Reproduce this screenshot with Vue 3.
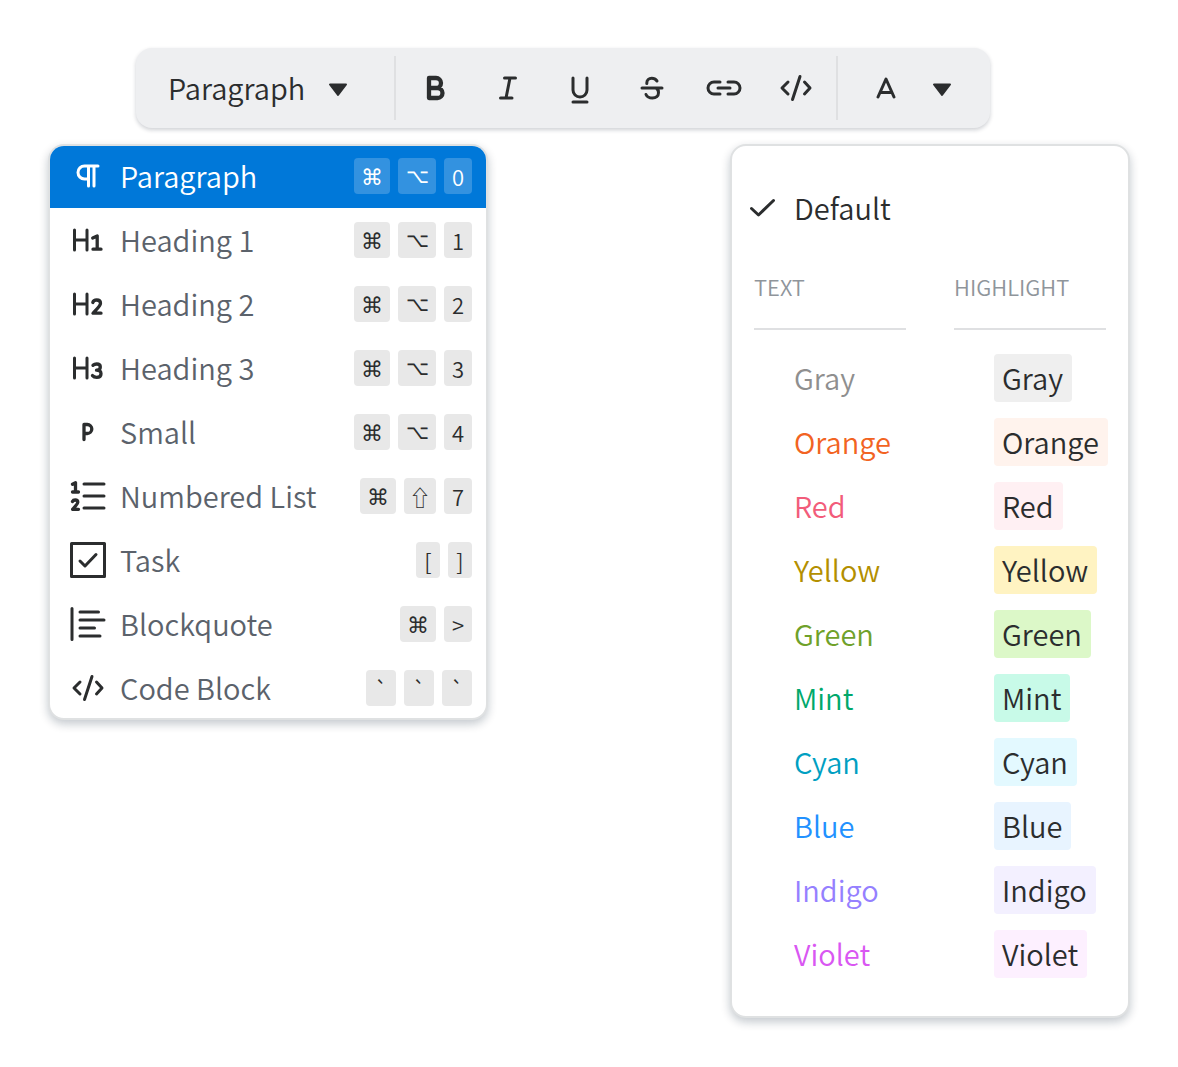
<script setup>
const formats = [
  { name: 'Bold', wide: true, d: 'M13 10h7a5 5 0 0 1 0 10H13zM13 20h8.500a5 5 0 0 1 0 10H13z' },
  { name: 'Italic', d: 'M16.500 10H27.500M12.500 30H24M22 10L18 30' },
  { name: 'Underline', d: 'M13 10V22a7 7 0 0 0 14 0V10M13 34H27' },
  { name: 'Strikethrough', d: 'M10 20H30M25 13C23.500 11 21.500 10.300 19.800 10.300C16.800 10.300 14.800 12.300 14.800 15V15.500M24.500 20.500C26 21.500 26.500 23 26.500 24.700C26.500 28 24 30 20.500 30C17.500 30 15 28.800 14 26.500' },
  { name: 'Link', d: 'M16 14H10a6 6 0 0 0 0 12H16M24 14H30a6 6 0 0 1 0 12H24M14 20H26' },
  { name: 'Code', d: 'M12 14L6 20L12 26M28.500 14L34 20L28.500 26M24 8.500L16.500 31.500' },
]

const H = 'M4.500 8V28M17 8V28M4.500 18H17'
const blocks = [
  { name: 'Paragraph', active: true, keys: ['⌘', '⌥', '0'], d: 'M28 8H14.500a6.500 6.500 0 0 0 0 13H18.500M18.500 8V28M24 8V28' },
  { name: 'Heading 1', keys: ['⌘', '⌥', '1'], d: H, bold: 'M22.700 16L27.200 14V27M23 27.200H31' },
  { name: 'Heading 2', keys: ['⌘', '⌥', '2'], d: H, bold: 'M22.800 16.500C23.300 14.800 24.800 14 26.700 14C29 14 30.500 15.200 30.500 17.200C30.500 20 27 22.500 23 27.200H31' },
  { name: 'Heading 3', keys: ['⌘', '⌥', '3'], d: H, bold: 'M23 15.300C24 14.400 25.200 14 26.700 14C28.800 14 30.300 15 30.300 17C30.300 18.900 28.900 20.200 26.500 20.200C29.200 20.200 31 21.500 31 23.700C31 26 29.200 27.300 26.700 27.300C24.800 27.300 23.500 26.800 22.500 25.600' },
  { name: 'Small', keys: ['⌘', '⌥', '4'], d: '', bold: 'M14 25.500V10.500H17.300a4.500 4.500 0 0 1 0 9H14' },
  { name: 'Numbered List', keys: ['⌘', '⇧', '7'], d: 'M14 6H34M14 18H34M14 30H34', bold: 'M2.500 6.200L5.500 4.700V14M2.500 14H8.500M2.500 23.500C3 22.400 4 22 5.200 22C6.800 22 7.800 22.800 7.800 24.200C7.800 26.200 5 28 2.700 31.300H8.500' },
  { name: 'Task', keys: ['[', ']'], d: 'M1.500 1.500H34.500V34.500H1.500zM10 19L15 24L26 12.500' },
  { name: 'Blockquote', keys: ['⌘', '>'], d: 'M2 2.500V33.500M10 6H28.500M10 14H34M10 22H24.500M10 30H30' },
  { name: 'Code Block', keys: ['`', '`', '`'], d: 'M10 12L4 18L10 24M26.500 12L32 18L26.500 24M22 6.500L14.500 29.500' },
]

const keyClass = {
  '⌘': 'command',
  '⌥': 'option',
  '⇧': 'shift',
  '[': 'bracket',
  ']': 'bracket',
  '`': 'tick',
}

const colors = ['Gray', 'Orange', 'Red', 'Yellow', 'Green', 'Mint', 'Cyan', 'Blue', 'Indigo', 'Violet']
</script>

<template>
  <main class="editor">
    <div class="toolbar" role="toolbar" aria-label="Formatting">
      <button class="style-picker" type="button">
        <span class="label">Paragraph</span>
        <svg class="caret" viewBox="0 0 24 24" aria-hidden="true"><path d="M4 8.500H20L12 19z" /></svg>
      </button>
      <div class="formats">
        <button v-for="f in formats" :key="f.name" type="button" :aria-label="f.name">
          <svg class="icon tool" :class="{ heavy: f.wide }" viewBox="0 0 40 40" aria-hidden="true"><path :d="f.d" /></svg>
        </button>
      </div>
      <button class="color-picker" type="button" aria-label="Text color">
        <svg class="icon tool" viewBox="0 0 40 40" aria-hidden="true"><path d="M12 29L20 11L28 29M14.500 24.500H25.500" /></svg>
        <svg class="caret" viewBox="0 0 24 24" aria-hidden="true"><path d="M4 8.500H20L12 19z" /></svg>
      </button>
    </div>

    <div class="panels">
      <div class="panel blocks">
        <ul>
          <li v-for="b in blocks" :key="b.name">
            <button class="block" :class="{ active: b.active }" type="button">
              <svg class="icon" viewBox="0 0 36 36" aria-hidden="true">
                <path v-if="b.d" :d="b.d" />
                <path v-if="b.bold" class="bold" :d="b.bold" />
              </svg>
              <span class="label name">{{ b.name }}</span>
              <span class="keys">
                <kbd v-for="(k, i) in b.keys" :key="i" :class="keyClass[k]">{{ k }}</kbd>
              </span>
            </button>
          </li>
        </ul>
      </div>

      <div class="panel colors">
        <button class="default" type="button">
          <svg class="icon" viewBox="0 0 36 36" aria-hidden="true"><path d="M7.500 18.500L14.500 25L29.500 10.500" /></svg>
          <span class="label">Default</span>
        </button>
        <div class="columns">
          <section>
            <h2>TEXT</h2>
            <ul>
              <li v-for="c in colors" :key="c">
                <button type="button" :class="['label', 'ink', c.toLowerCase()]">{{ c }}</button>
              </li>
            </ul>
          </section>
          <section>
            <h2>HIGHLIGHT</h2>
            <ul>
              <li v-for="c in colors" :key="c">
                <button type="button" :class="['label', 'chip', c.toLowerCase()]">{{ c }}</button>
              </li>
            </ul>
          </section>
        </div>
      </div>
    </div>
  </main>
</template>

<style>
body {
  margin: 0;
  background: #fff;
}
</style>

<style scoped>
.editor {
  box-sizing: border-box;
  padding: 48px;
  color: #2b2d2e;
  font-family: "Noto Sans CJK SC", "Noto Sans", sans-serif;
  font-size: 29px;
  font-weight: 350;
  line-height: 46px;
}

button {
  margin: 0;
  padding: 0;
  border: 0;
  background: none;
  color: inherit;
  font: inherit;
  text-align: left;
  white-space: nowrap;
  cursor: pointer;
}

ul {
  margin: 0;
  padding: 0;
  list-style: none;
}

.label {
  padding-bottom: 2px;
}

.icon {
  flex: none;
  width: 36px;
  height: 36px;
  fill: none;
  stroke: #2b2d2e;
  stroke-width: 3;
  stroke-linecap: round;
  stroke-linejoin: round;
}

.icon .bold {
  stroke-width: 3.3;
}

.icon.tool {
  width: 40px;
  height: 40px;
}

.icon.heavy {
  stroke-width: 4.3;
}

.caret {
  flex: none;
  width: 24px;
  height: 24px;
  fill: #2b2d2e;
  stroke: #2b2d2e;
  stroke-width: 2;
  stroke-linejoin: round;
}

.toolbar {
  display: flex;
  align-items: center;
  width: fit-content;
  height: 80px;
  margin-left: 88px;
  border-radius: 16px;
  background: #eeeff1;
  box-shadow: 0 2px 4px rgba(9, 20, 40, 0.2);
}

.style-picker {
  display: flex;
  align-items: center;
  gap: 21px;
  padding: 0 44px 0 32px;
}

.formats {
  display: flex;
  padding: 0 4px;
  border: solid #dfe0e2;
  border-width: 0 2px;
}

.formats button {
  display: flex;
  align-items: center;
  justify-content: center;
  width: 72px;
  height: 64px;
}

.color-picker {
  display: flex;
  align-items: center;
  gap: 24px;
  padding: 0 36px 0 28px;
}

.panels {
  display: flex;
  align-items: flex-start;
  justify-content: space-between;
  gap: 32px;
  margin-top: 16px;
}

.panel {
  box-sizing: border-box;
  overflow: hidden;
  border: 2px solid #dfe1e2;
  border-radius: 16px;
  background: #fff;
  box-shadow: 0 4px 10px rgba(9, 30, 50, 0.24);
}

.blocks {
  flex: 0 1 440px;
}

/* The highlighted row runs under the border on every side. */
.blocks ul {
  margin: -2px;
}

.block {
  display: flex;
  align-items: center;
  gap: 14px;
  width: 100%;
  height: 64px;
  padding: 0 16px 0 22px;
}

.name {
  flex: 1;
  color: #5b626b;
}

.block.active {
  background: #0078d9;
}

.active .name,
.active kbd {
  color: #fff;
}

.active .icon {
  stroke: #fff;
}

.keys {
  display: flex;
  gap: 8px;
}

kbd {
  width: 28px;
  height: 36px;
  border-radius: 4px;
  background: #e8e8e8;
  font-family: "Noto Sans CJK SC", "DejaVu Sans", sans-serif;
  font-size: 22px;
  line-height: 36px;
  text-align: center;
}

.active kbd {
  background: #3392e0;
}

.command {
  width: 36px;
  font-family: "DejaVu Sans", sans-serif;
  line-height: 40px;
}

.option {
  width: 38px;
  font-size: 20px;
  line-height: 34px;
}

.shift {
  width: 32px;
}

.bracket {
  width: 24px;
}

.tick {
  width: 30px;
}

.colors {
  flex: 0 1 400px;
  padding: 30px 0;
}

.default {
  display: flex;
  align-items: center;
  gap: 14px;
  width: 100%;
  height: 64px;
  padding-left: 12px;
}

.columns {
  display: flex;
  gap: 48px;
  padding: 0 22px;
}

.columns section {
  flex: 1;
  min-width: 0;
}

h2 {
  margin: 0 0 16px;
  padding: 30px 0 26px;
  border-bottom: 2px solid #dfe0e2;
  color: #8f959b;
  font-size: 22px;
  font-weight: 350;
  line-height: 32px;
}

.columns li {
  display: flex;
  align-items: center;
  height: 64px;
  padding-left: 40px;
}

.chip {
  padding-right: 9px;
  padding-left: 8px;
  border-radius: 4px;
}

.ink.gray { color: #8f8f8f; }
.ink.orange { color: #f26322; }
.ink.red { color: #f25c7a; }
.ink.yellow { color: #b38f00; }
.ink.green { color: #6fa12a; }
.ink.mint { color: #00a86b; }
.ink.cyan { color: #009fc2; }
.ink.blue { color: #2291ff; }
.ink.indigo { color: #9580ff; }
.ink.violet { color: #d957f2; }

.chip.gray { background: #efefef; }
.chip.orange { background: #fff3ed; }
.chip.red { background: #fff0f3; }
.chip.yellow { background: #fff3c2; }
.chip.green { background: #dcf8c8; }
.chip.mint { background: #c8fae8; }
.chip.cyan { background: #e3f9ff; }
.chip.blue { background: #e8f4ff; }
.chip.indigo { background: #f3f0ff; }
.chip.violet { background: #fdf0ff; }
</style>
